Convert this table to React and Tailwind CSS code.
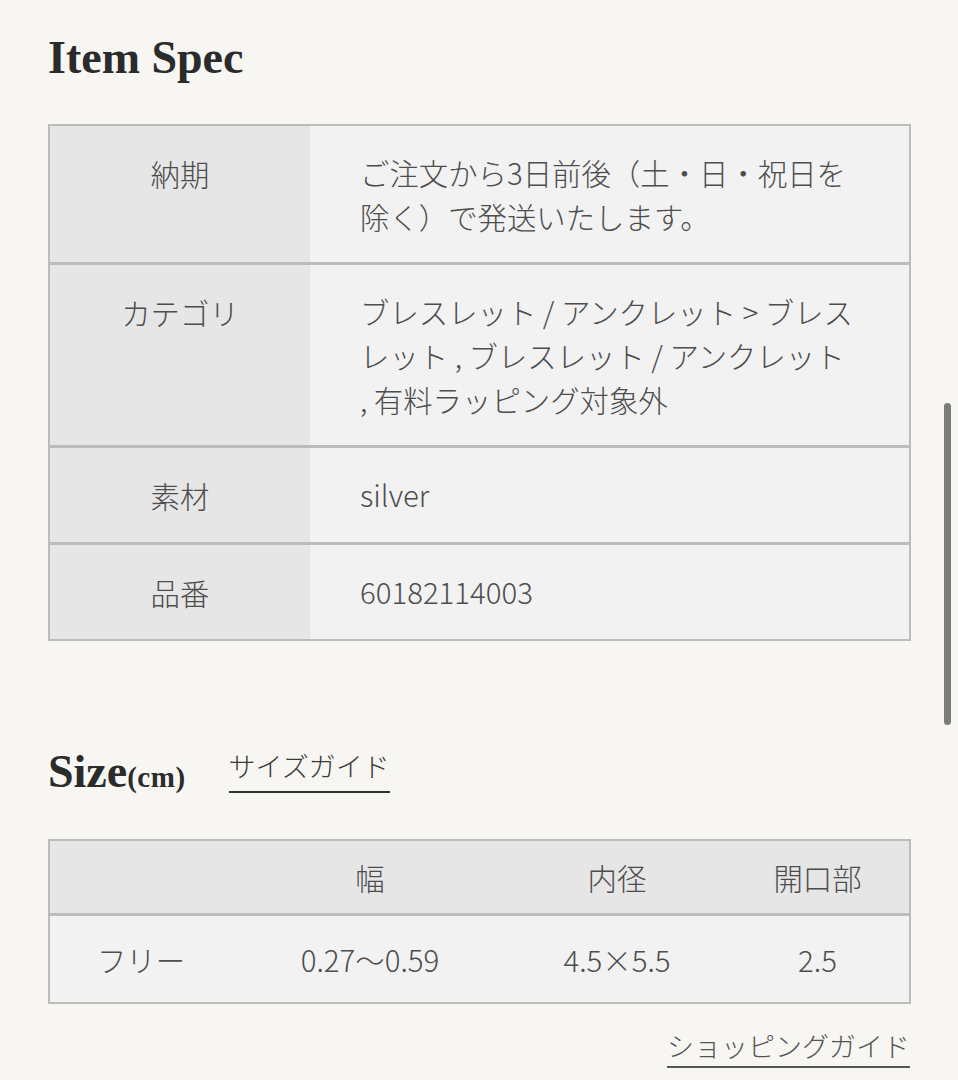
export default function App() {
    const specs = [
        { label: "納期", value: <>ご注文から3日前後（土・日・祝日を<br />除く）で発送いたします。</> },
        { label: "カテゴリ", value: <>ブレスレット / アンクレット &gt; ブレス<br />レット , ブレスレット / アンクレット<br />, 有料ラッピング対象外</> },
        { label: "素材", value: "silver" },
        { label: "品番", value: "60182114003" },
    ];

    const jp = { fontFamily: '"Noto Sans CJK JP Light", "Noto Sans CJK JP", "Noto Sans", sans-serif' };
    const serif = { fontFamily: '"Liberation Serif", "DejaVu Serif", serif' };

    return (
        <div className="relative min-h-[1080px] w-[958px] bg-[#f7f6f2] px-[48px] pt-[30px] overflow-hidden" style={jp}>

            {/* Item Spec */}
            <h2 className="text-[46px] leading-[56px] font-bold text-[#2b2b2b]" style={serif}>Item Spec</h2>

            <div className="mt-[38px] w-[863px] border-2 border-[#bcbcbc] text-[29.4px] leading-[44px] font-light text-[#4d4d4d]">
                {specs.map((row, i) => (
                    <div key={row.label} className={`flex ${i > 0 ? "border-t-[3px] border-[#bcbcbc]" : ""}`}>
                        <div className="w-[260px] shrink-0 bg-[#e6e6e6] py-[25px] text-center">{row.label}</div>
                        <div className="flex-1 bg-[#f2f2f2] py-[24px] pl-[50px] pr-[20px]">{row.value}</div>
                    </div>
                ))}
            </div>

            {/* Size */}
            <div className="mt-[103px] flex items-end">
                <h2 className="text-[46px] leading-[56px] font-bold text-[#2b2b2b]" style={serif}>
                    Size<span className="text-[29px] tracking-[0.5px]">(cm)</span>
                </h2>
                <a className="ml-[43px] mb-[12px] border-b-2 border-[#333] pb-[8px] text-[27px] leading-[34px] font-light text-[#3a3a3a]">サイズガイド</a>
            </div>

            <div className="mt-[34px] w-[863px] border-2 border-[#bcbcbc] text-[29.4px] leading-[44px] font-light text-[#4d4d4d]">
                <div className="grid grid-cols-[182px_276px_218px_1fr] bg-[#e6e6e6] py-[14px] text-center">
                    <div></div>
                    <div>幅</div>
                    <div>内径</div>
                    <div>開口部</div>
                </div>
                <div className="grid grid-cols-[182px_276px_218px_1fr] border-t-[3px] border-[#bcbcbc] bg-[#f2f2f2] py-[21px] text-center">
                    <div>フリー</div>
                    <div>0.27〜0.59</div>
                    <div>4.5×5.5</div>
                    <div>2.5</div>
                </div>
            </div>

            <div className="mt-[25px] flex justify-end">
                <a className="border-b-2 border-[#555] pb-[3px] text-[27px] leading-[34px] text-[#555]">ショッピングガイド</a>
            </div>

            {/* Scrollbar */}
            <div className="absolute left-[944px] top-[403px] h-[322px] w-[7px] rounded-full bg-[#7b7b7b]"></div>
        </div>
    );
}
